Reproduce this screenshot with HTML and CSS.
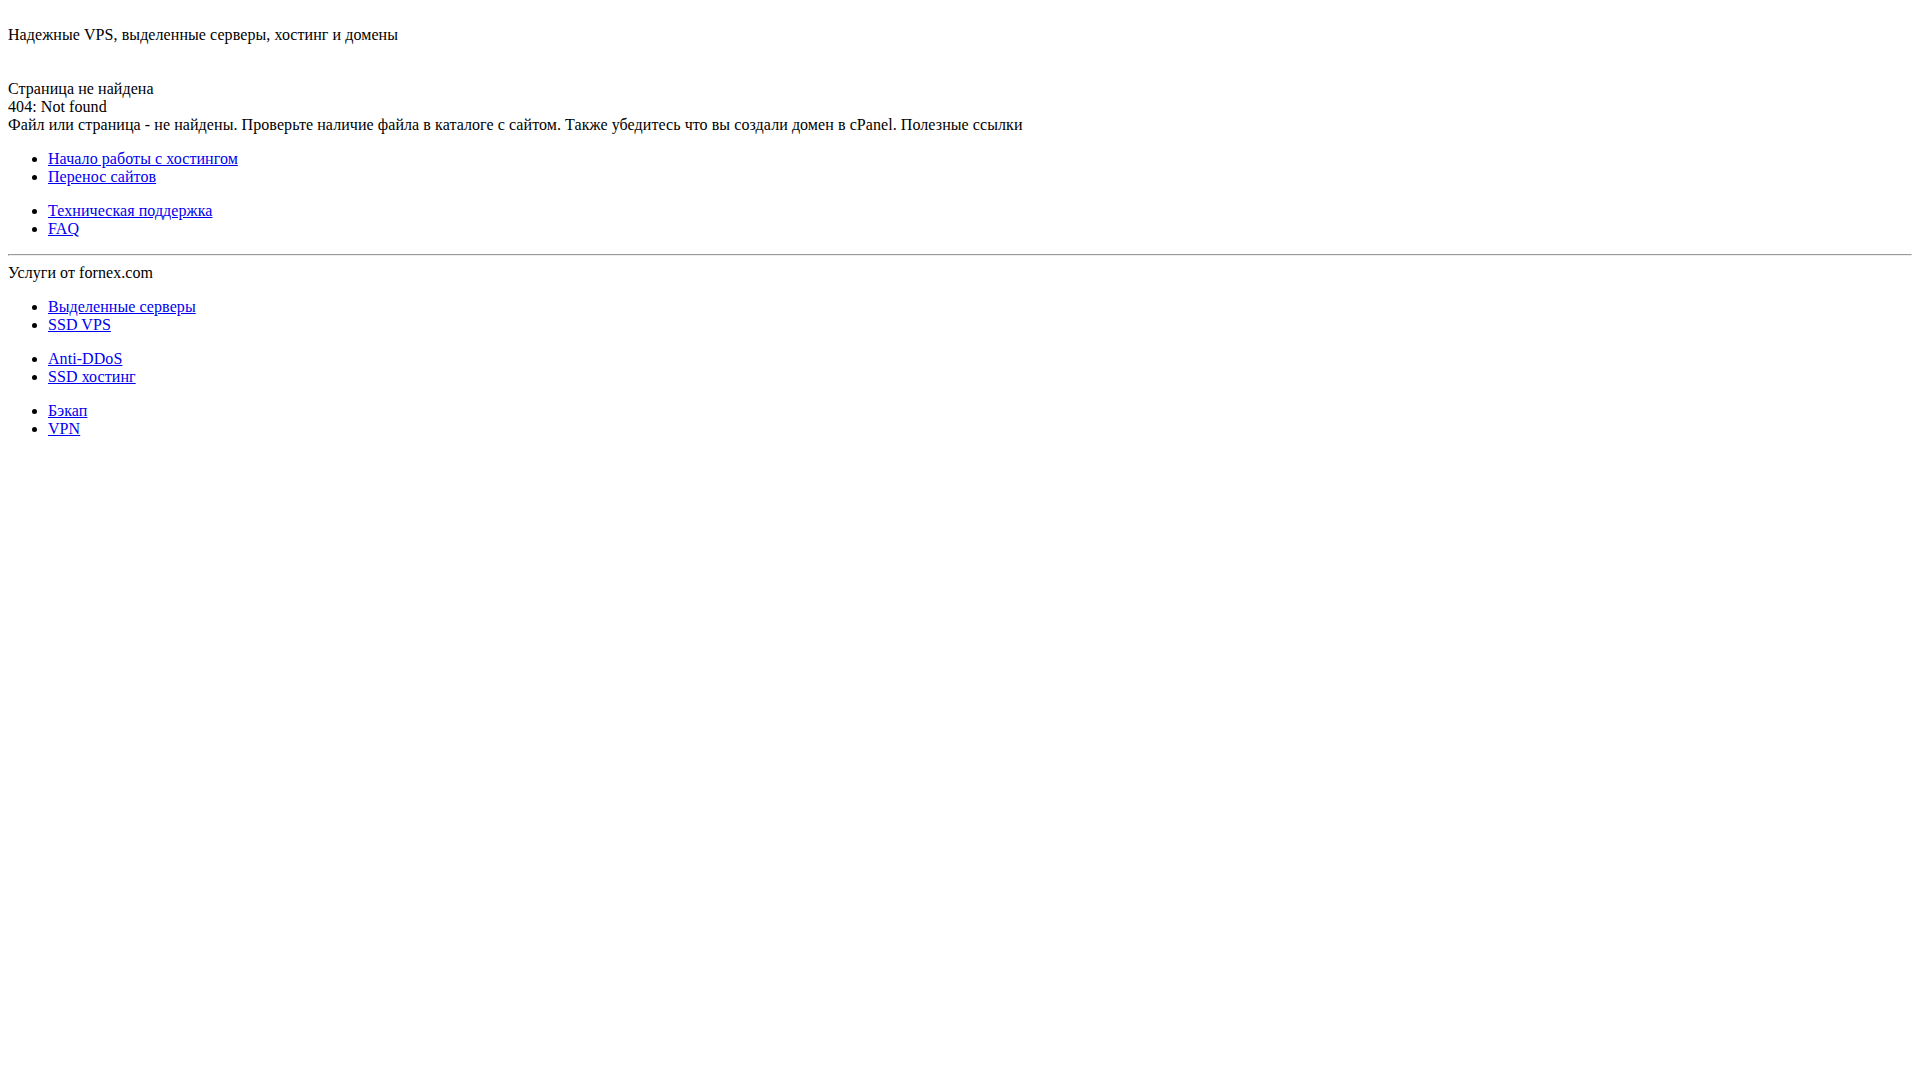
FILE: index.html
```html
<!DOCTYPE html>
<html lang="ru">
<head>
<meta charset="utf-8">
<title>404: Not found</title>
<link rel="stylesheet" href="styles.css">
</head>
<body>
<div class="header"><p class="tagline">Надежные VPS, выделенные серверы, хостинг и домены</p></div>
<div class="content">
<p class="message">Страница не найдена<br>404: Not found<br>Файл или страница - не найдены. Проверьте наличие файла в каталоге с сайтом. Также убедитесь что вы создали домен в cPanel. Полезные ссылки</p>
<ul>
<li><a href="#">Начало работы с хостингом</a></li>
<li><a href="#">Перенос сайтов</a></li>
</ul>
<ul>
<li><a href="#">Техническая поддержка</a></li>
<li><a href="#">FAQ</a></li>
</ul>
<hr>
<p class="services">Услуги от fornex.com</p>
<ul>
<li><a href="#">Выделенные серверы</a></li>
<li><a href="#">SSD VPS</a></li>
</ul>
<ul>
<li><a href="#">Anti-DDoS</a></li>
<li><a href="#">SSD хостинг</a></li>
</ul>
<ul>
<li><a href="#">Бэкап</a></li>
<li><a href="#">VPN</a></li>
</ul>
</div>
</body>
</html>
```
FILE: styles.css
```css
body {
  margin: 8px;
  font-family: "Liberation Serif", "Times New Roman", serif;
  font-size: 16px;
  letter-spacing: 0.07px;
  color: #000;
  background: #fff;
}
.tagline {
  margin: 18px 0 0 0;
}
.message {
  margin: 36px 0 0 0;
}
.services {
  margin: 0;
}
ul {
  margin: 16px 0;
  padding-left: 40px;
}
a {
  color: #0000ee;
}
hr {
  margin: 8px 0;
}
```
